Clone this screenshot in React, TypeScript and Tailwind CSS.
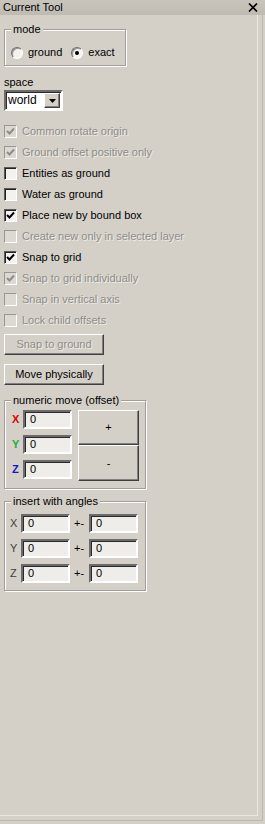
import React from 'react'

const font = "font-['Liberation_Sans','Arial',sans-serif]"
const dim = 'text-[#8f8c87] [text-shadow:1px_1px_0_rgba(255,255,255,0.6)]'

const Check = ({ checked, disabled, label }: { checked?: boolean; disabled?: boolean; label: string }) => (
  <div className="flex items-center h-[21px]">
    <span
      className={`w-[13px] h-[13px] flex items-center justify-center border border-t-[#5a5a5a] border-l-[#5a5a5a] border-r-white border-b-white ${
        disabled ? 'bg-[#dcd9d3] border-t-[#9a9792] border-l-[#9a9792]' : 'bg-[#f3f2ef] shadow-[inset_1px_1px_0_#222]'
      }`}
    >
      {checked && (
        <svg width="9" height="9" viewBox="0 0 9 9">
          <path d="M1 4 L3.5 6.5 L8 1.5" stroke={disabled ? '#8f8c87' : '#000'} strokeWidth="2" fill="none" />
        </svg>
      )}
    </span>
    <span className={`ml-[5px] ${disabled ? dim : 'text-black'}`}>{label}</span>
  </div>
)

const Radio = ({ on, label }: { on?: boolean; label: string }) => (
  <div className="flex items-center">
    <span className="w-[12px] h-[12px] rounded-full flex items-center justify-center bg-[#f3f2ef] border border-t-[#6e6e6e] border-l-[#6e6e6e] border-r-white border-b-white shadow-[inset_1px_1px_0_#9a9893]">
      {on && <span className="w-[4px] h-[4px] rounded-full bg-black" />}
    </span>
    <span className="ml-[5px]">{label}</span>
  </div>
)

const Field = ({ w = 'w-[49px]' }: { w?: string }) => (
  <div className={`${w} h-[19px] flex items-center pl-[5px] bg-[#eeedea] border-2 border-t-[#6b6b6b] border-l-[#6b6b6b] border-r-white border-b-white shadow-[inset_1px_1px_0_#2a2a2a]`}>
    0
  </div>
)

const Btn = ({ children, disabled, cls = '' }: { children: React.ReactNode; disabled?: boolean; cls?: string }) => (
  <div
    className={`flex items-center justify-center bg-[#d4d0c8] border border-t-white border-l-white border-r-[#404040] border-b-[#404040] shadow-[inset_-1px_-1px_0_#808080] ${
      disabled ? dim : 'text-black'
    } ${cls}`}
  >
    {children}
  </div>
)

const Group = ({ title, cls, children }: { title: string; cls: string; children: React.ReactNode }) => (
  <div className={`relative border border-[#a29f99] shadow-[inset_1px_1px_0_#fff,1px_1px_0_#fff] ${cls}`}>
    <span className="absolute left-[6px] top-[-7px] px-[2px] bg-[#d4d0c8] leading-[13px]">{title}</span>
    {children}
  </div>
)

export default function App() {
  return (
    <div className={`w-[265px] h-[824px] bg-[#d4d0c8] text-[11px] leading-[13px] text-black ${font}`}>
      <div className="h-[15px] flex items-center justify-between pl-[3px] pr-[7px] bg-gradient-to-b from-[#c9c5bd] to-[#bfbbb3]">
        <span className="text-[11px]">Current Tool</span>
        <svg width="10" height="9" viewBox="0 0 10 9">
          <path d="M1 0.5 L9 8.5 M9 0.5 L1 8.5" stroke="#000" strokeWidth="1.6" />
        </svg>
      </div>
      <div className="w-[263px] h-[806px] border-r border-b border-[#bcb8b0]">
        <div className="w-[258px] h-[801px] border-r border-b border-[#e9e7e2] pl-[4px] flex flex-col">
          <Group title="mode" cls="mt-[14px] w-[122px] h-[37px]">
            <div className="flex items-center pt-[16px] pl-[6px] gap-[9px]">
              <Radio label="ground" />
              <Radio on label="exact" />
            </div>
          </Group>

          <div className="mt-[10px]">space</div>
          <div className="mt-[1px] w-[59px] h-[21px] flex items-center justify-between bg-white border-2 border-t-[#6b6b6b] border-l-[#6b6b6b] border-r-white border-b-white shadow-[inset_1px_1px_0_#2a2a2a] pl-[2px]">
            <span className="text-[12px]">world</span>
            <Btn cls="w-[16px] h-[15px] mr-[1px]">
              <svg width="7" height="4" viewBox="0 0 7 4">
                <path d="M0 0 H7 L3.5 4 Z" fill="#000" />
              </svg>
            </Btn>
          </div>

          <div className="mt-[10px] flex flex-col">
            <Check checked disabled label="Common rotate origin" />
            <Check checked disabled label="Ground offset positive only" />
            <Check label="Entities as ground" />
            <Check label="Water as ground" />
            <Check checked label="Place new by bound box" />
            <Check disabled label="Create new only in selected layer" />
            <Check checked label="Snap to grid" />
            <Check checked disabled label="Snap to grid individually" />
            <Check disabled label="Snap in vertical axis" />
            <Check disabled label="Lock child offsets" />
          </div>

          <Btn disabled cls="mt-[3px] w-[100px] h-[21px]">Snap to ground</Btn>
          <Btn cls="mt-[9px] w-[100px] h-[21px]">Move physically</Btn>

          <Group title="numeric move (offset)" cls="mt-[15px] w-[142px] h-[89px]">
            <div className="flex pt-[9px] pl-[7px]">
              <div className="flex flex-col gap-[6px]">
                {[
                  ['X', 'text-[#e00000]'],
                  ['Y', 'text-[#1fae2e]'],
                  ['Z', 'text-[#1414c8]'],
                ].map(([l, c]) => (
                  <div key={l} className="flex items-center">
                    <span className={`w-[11px] font-bold ${c}`}>{l}</span>
                    <Field />
                  </div>
                ))}
              </div>
              <div className="ml-[6px] flex flex-col">
                <Btn cls="w-[61px] h-[35px]">+</Btn>
                <Btn cls="w-[61px] h-[36px]">-</Btn>
              </div>
            </div>
          </Group>

          <Group title="insert with angles" cls="mt-[12px] w-[142px] h-[90px]">
            <div className="flex flex-col gap-[6px] pt-[12px] pl-[5px]">
              {['X', 'Y', 'Z'].map((l) => (
                <div key={l} className="flex items-center">
                  <span className="w-[11px] text-[#404040]">{l}</span>
                  <Field />
                  <span className="w-[19px] pl-[4px]">+-</span>
                  <Field />
                </div>
              ))}
            </div>
          </Group>
        </div>
      </div>
    </div>
  )
}
